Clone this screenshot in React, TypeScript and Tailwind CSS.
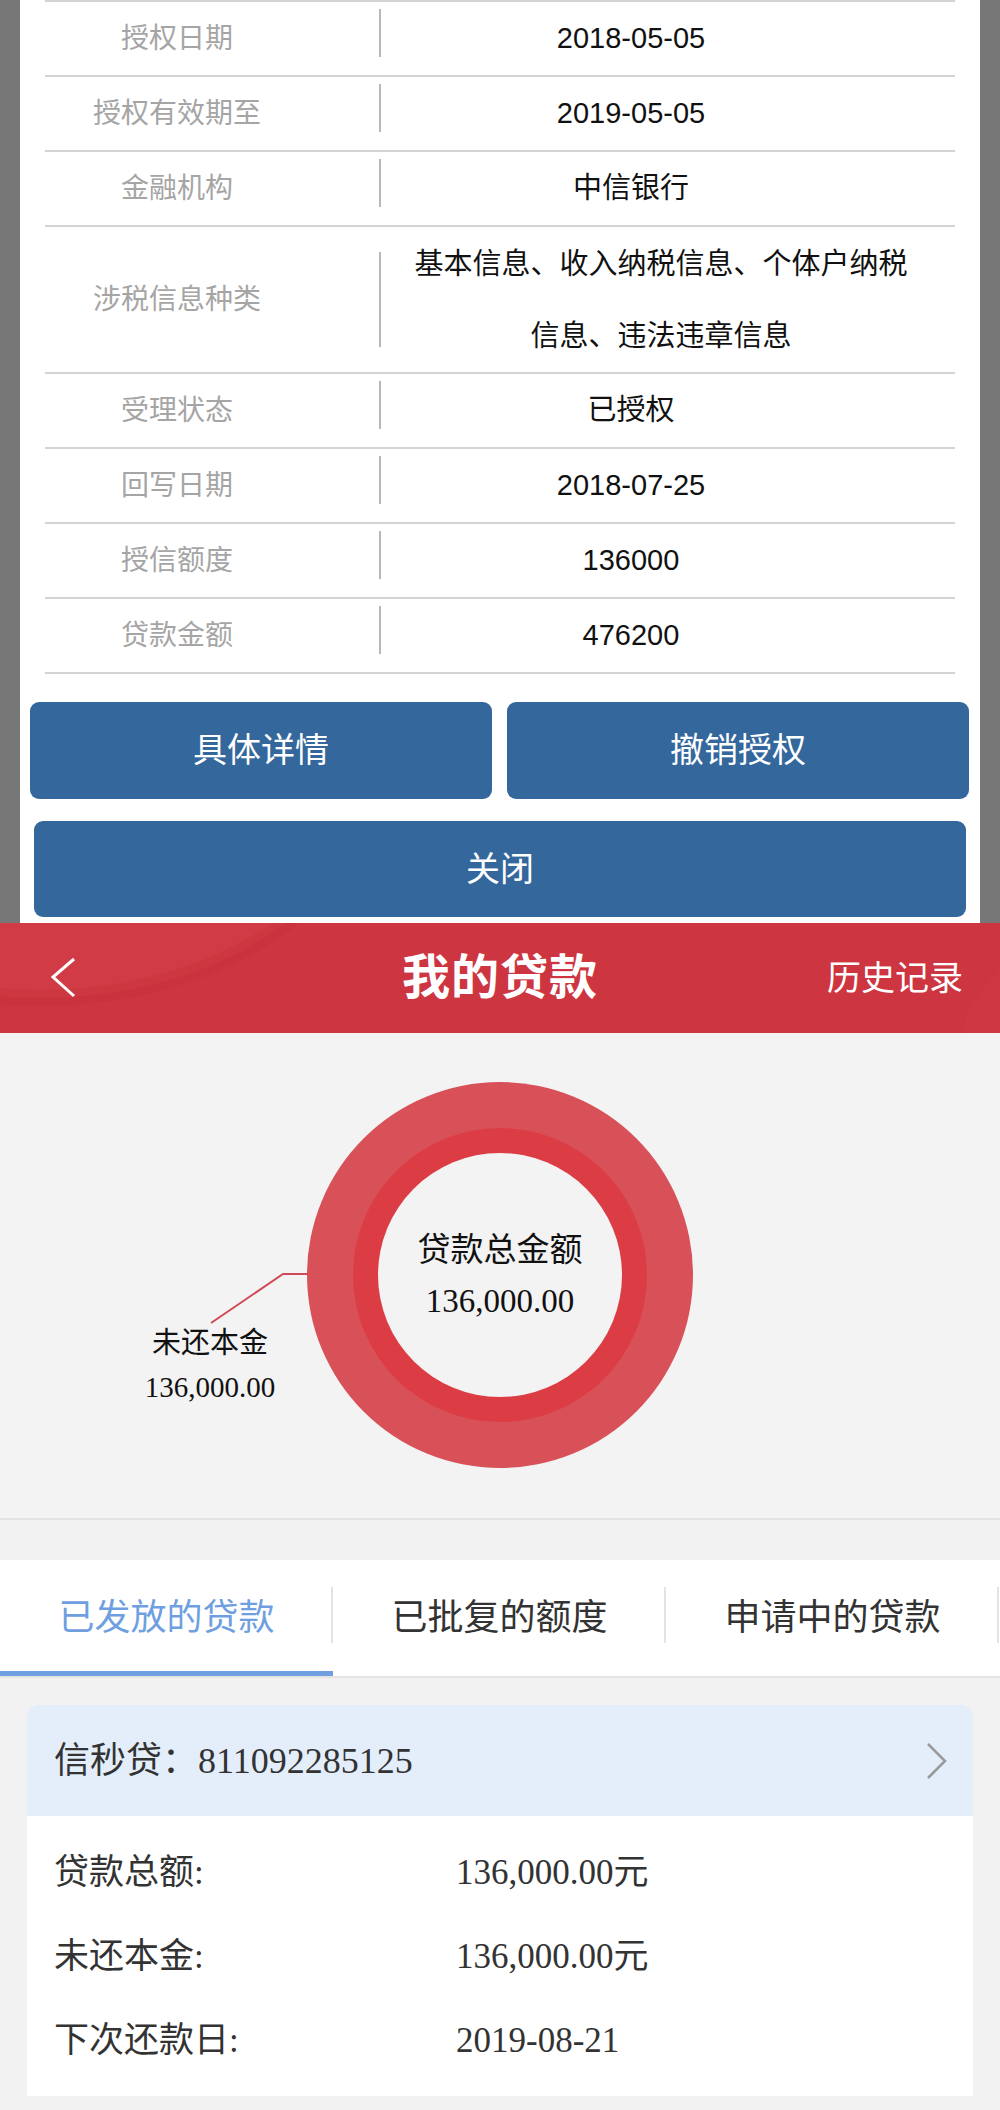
import React from "react";

const rows: [string, string | null][] = [
  ["授权日期", "2018-05-05"],
  ["授权有效期至", "2019-05-05"],
  ["金融机构", "中信银行"],
  ["涉税信息种类", null],
  ["受理状态", "已授权"],
  ["回写日期", "2018-07-25"],
  ["授信额度", "136000"],
  ["贷款金额", "476200"],
];

function TableRow({ label, value }: { label: string; value: string | null }) {
  if (value === null) {
    return (
      <div className="flex h-[147px] border-b-2 border-[#d4d4d4]">
        <div className="w-[264px] flex items-center justify-center text-[28px] text-[#a5a5a5]">{label}</div>
        <div className="w-[70px]" />
        <div className="w-[2px] h-[95px] mt-[25px] bg-[#b8b8b8]" />
        <div className="w-[560px] flex items-center justify-center text-center text-[29px] leading-[72px] text-[#111]">
          <div>
            基本信息、收入纳税信息、个体户纳税
            <br />
            信息、违法违章信息
          </div>
        </div>
      </div>
    );
  }
  return (
    <div className="flex h-[75px] border-b-2 border-[#d4d4d4]">
      <div className="w-[264px] flex items-center justify-center text-[28px] text-[#a5a5a5]">{label}</div>
      <div className="w-[70px]" />
      <div className="w-[2px] h-[48px] mt-[7px] bg-[#b8b8b8]" />
      <div className="w-[500px] flex items-center justify-center text-[29px] text-[#111]">{value}</div>
    </div>
  );
}

export default function App() {
  return (
    <div className="w-[1000px] min-h-[2110px] bg-[#f2f2f2] font-['Liberation_Sans','Noto_Sans_CJK_SC',sans-serif]">
      {/* Modal section */}
      <div className="bg-[#777777] px-[20px]">
        <div className="bg-white h-[923px] flex flex-col">
          <div className="mx-[25px]">
            <div className="h-[2px] bg-[#d4d4d4]" />
            {rows.map(([l, v]) => (
              <TableRow key={l} label={l} value={v} />
            ))}
          </div>
          <div className="flex gap-[15px] pl-[10px] pr-[11px] mt-[28px]">
            <button className="flex-1 h-[97px] rounded-[9px] bg-[#34679c] text-white text-[34px]">具体详情</button>
            <button className="flex-1 h-[97px] rounded-[9px] bg-[#34679c] text-white text-[34px]">撤销授权</button>
          </div>
          <div className="px-[14px] mt-[22px]">
            <button className="w-full h-[96px] rounded-[9px] bg-[#34679c] text-white text-[34px]">关闭</button>
          </div>
        </div>
      </div>

      {/* Red header */}
      <div className="relative h-[110px] bg-[#cd3541] overflow-hidden">
        <svg className="absolute inset-0" width="1000" height="110" viewBox="0 0 1000 110">
          <ellipse cx="40" cy="-150" rx="330" ry="225" fill="#d03b45" />
          <ellipse cx="40" cy="-150" rx="330" ry="225" fill="none" stroke="#c52e36" strokeWidth="16" opacity="0.3" />
          <ellipse cx="1080" cy="130" rx="120" ry="110" fill="#d03a44" opacity="0.6" />
        </svg>
        <div className="relative grid grid-cols-[1fr_auto_1fr] items-center h-full">
          <div className="pl-[50px] flex items-center">
            <svg width="28" height="42" viewBox="0 0 28 42">
              <polyline points="24,2 3,20 24,39" fill="none" stroke="#ffffff" strokeWidth="3" />
            </svg>
          </div>
          <div className="text-white text-[48px] font-bold tracking-[1px]">我的贷款</div>
          <div className="flex justify-end pr-[37px] text-white text-[34px]">历史记录</div>
        </div>
      </div>

      {/* Chart */}
      <div className="relative h-[487px] bg-[#f3f3f3] border-b-2 border-[#e3e3e3] font-['Liberation_Serif','Noto_Sans_CJK_SC',serif] text-[#111]">
        <svg className="absolute left-0 top-0" width="1000" height="485" viewBox="0 0 1000 485">
          <circle cx="500" cy="242" r="193" fill="#d95158" />
          <circle cx="500" cy="242" r="147" fill="#dc3d44" />
          <circle cx="500" cy="242" r="122" fill="#f4f3f4" />
          <polyline points="308,241 283,241 211,290" fill="none" stroke="#cf4a55" strokeWidth="2" />
        </svg>
        <div className="absolute top-[197px] left-[350px] w-[300px] flex flex-col items-center gap-[11px]">
          <div className="text-[33px] leading-[40px]">贷款总金额</div>
          <div className="text-[33px] leading-[40px]">136,000.00</div>
        </div>
        <div className="absolute top-[290px] left-[110px] w-[200px] flex flex-col items-center gap-[4px]">
          <div className="text-[29px] leading-[40px]">未还本金</div>
          <div className="text-[29px] leading-[40px]">136,000.00</div>
        </div>
      </div>

      {/* Tabs */}
      <div className="mt-[40px] flex h-[118px] bg-white border-b-2 border-[#e3e3e3]">
        {["已发放的贷款", "已批复的额度", "申请中的贷款"].map((t, i) => (
          <div key={t} className="relative w-[333px] flex items-center justify-center">
            <span className={i === 0 ? "text-[36px] text-[#6f9fe0]" : "text-[36px] text-[#333]"}>{t}</span>
            <div className="absolute right-0 top-[27px] h-[56px] w-[2px] bg-[#e3e3e3]" />
            {i === 0 && <div className="absolute left-0 right-0 bottom-0 h-[5px] bg-[#6f9fe0]" />}
          </div>
        ))}
      </div>

      {/* Card */}
      <div className="mx-[27px] mt-[27px] rounded-t-[12px] overflow-hidden font-['Liberation_Serif','Noto_Sans_CJK_SC',serif] text-[#333]">
        <div className="h-[111px] bg-[#e4eefb] flex items-center justify-between pl-[27px] pr-[24px]">
          <div className="text-[36px]">信秒贷：811092285125</div>
          <svg width="24" height="38" viewBox="0 0 24 38">
            <polyline points="3,2 20,19 3,36" fill="none" stroke="#9a9a9a" strokeWidth="2.5" />
          </svg>
        </div>
        <div className="bg-white h-[280px] pt-[15px]">
          {[
            ["贷款总额:", "136,000.00元"],
            ["未还本金:", "136,000.00元"],
            ["下次还款日:", "2019-08-21"],
          ].map(([l, v]) => (
            <div key={l} className="h-[84px] flex items-center pl-[27px] text-[35px]">
              <div className="w-[402px]">{l}</div>
              <div>{v}</div>
            </div>
          ))}
        </div>
      </div>
    </div>
  );
}
